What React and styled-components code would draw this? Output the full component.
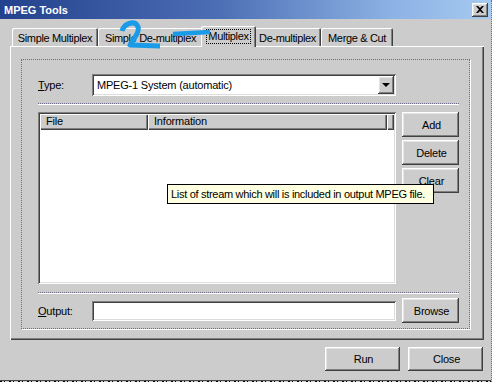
import React from 'react';
import styled, { createGlobalStyle, css } from 'styled-components';

const GlobalStyle = createGlobalStyle`
  html, body {
    margin: 0;
    padding: 0;
    background: #cccccc;
  }
  * {
    box-sizing: border-box;
  }
`;

const raised = css`
  box-shadow: inset -1px -1px #404040, inset 1px 1px #ffffff,
    inset -2px -2px #808080, inset 2px 2px #e4e4e4;
`;

const sunken = css`
  box-shadow: inset 1px 1px #808080, inset -1px -1px #ffffff,
    inset 2px 2px #404040, inset -2px -2px #dcdcdc;
`;

const Window = styled.div`
  position: relative;
  width: 492px;
  height: 382px;
  background: #cccccc;
  font-family: 'Liberation Sans', Arial, sans-serif;
  font-size: 11px;
  letter-spacing: -0.2px;
  color: #000;
  border-right: 1px dotted #6a6a88;
  display: flex;
  flex-direction: column;
  overflow: hidden;
`;

const TitleBar = styled.div`
  height: 19px;
  display: flex;
  align-items: center;
  justify-content: space-between;
  padding: 0 3px 0 4px;
  background: linear-gradient(90deg, #23418c 0%, #4d6fb6 45%, #8db2e4 80%, #a6caf0 100%);
`;

const Title = styled.span`
  color: #ffffff;
  font-weight: bold;
  font-size: 11px;
  letter-spacing: 0;
`;

const CaptionButton = styled.div`
  width: 16px;
  height: 14px;
  background: #cccccc;
  ${raised};
  display: flex;
  align-items: center;
  justify-content: center;
`;

const Body = styled.div`
  flex: 1;
  padding: 7px 7px 0 10px;
  display: flex;
  flex-direction: column;
`;

const TabStrip = styled.div`
  height: 20px;
  display: flex;
  align-items: flex-end;
  padding-left: 2px;
`;

const Tab = styled.div`
  width: ${p => p.$w}px;
  height: ${p => (p.$active ? 21 : 18)}px;
  margin: ${p => (p.$active ? '0 -2px -1px -2px' : '0')};
  position: relative;
  z-index: ${p => (p.$active ? 2 : 1)};
  background: #cccccc;
  border-radius: 2px 2px 0 0;
  box-shadow: inset 1px 1px #ffffff, inset -1px 0 #404040, inset -2px 0 #808080;
  display: flex;
  align-items: center;
  justify-content: center;
  padding-top: ${p => (p.$active ? 0 : 2)}px;
  white-space: nowrap;
  letter-spacing: -0.35px;
`;

const FocusText = styled.span`
  outline: 1px dotted #000;
  outline-offset: 0;
  padding: 0 1px;
  line-height: 13px;
`;

const Panel = styled.div`
  width: 474px;
  height: 294px;
  padding: 13px 0 0 11px;
  background: #cccccc;
  box-shadow: inset 1px 1px #ffffff, inset -1px -1px #404040, inset -2px -2px #808080;
`;

const Group = styled.div`
  width: 449px;
  height: 270px;
  border: 1px dotted #6a6a88;
  box-shadow: 1px 1px 0 #ffffff;
  padding: 14px 10px 0 16px;
  display: flex;
  flex-direction: column;
`;

const FieldRow = styled.div`
  height: ${p => p.$h}px;
  display: flex;
  align-items: center;
`;

const Label = styled.span`
  width: 54px;
  flex-shrink: 0;
`;

const U = styled.span`
  text-decoration: underline;
`;

const Combo = styled.div`
  width: 304px;
  height: 22px;
  background: #ffffff;
  ${sunken};
  display: flex;
  align-items: center;
  justify-content: space-between;
  padding: 0 2px 0 5px;
`;

const DropButton = styled.div`
  width: 16px;
  height: 18px;
  background: #cccccc;
  ${raised};
  display: flex;
  align-items: center;
  justify-content: center;
`;

const Arrow = styled.div`
  width: 0;
  height: 0;
  border-left: 4px solid transparent;
  border-right: 4px solid transparent;
  border-top: 4px solid #000;
`;

const Separator = styled.div`
  height: 2px;
  margin-top: ${p => p.$top}px;
  border-top: 1px dotted #6a6a88;
  border-bottom: 1px solid #ffffff;
`;

const ListRow = styled.div`
  margin-top: 7px;
  height: 172px;
  display: flex;
  gap: 6px;
`;

const ListView = styled.div`
  width: 358px;
  height: 172px;
  background: #ffffff;
  ${sunken};
  padding: 2px;
`;

const HeaderRow = styled.div`
  display: flex;
  height: 16px;
`;

const HeaderCell = styled.div`
  width: ${p => p.$w}px;
  flex: ${p => (p.$fill ? 1 : 'none')};
  height: 16px;
  background: #cccccc;
  box-shadow: inset 1px 1px #ffffff, inset -1px -1px #404040, inset -2px -2px #808080;
  padding: 1px 0 0 6px;
  line-height: 13px;
`;

const ButtonColumn = styled.div`
  display: flex;
  flex-direction: column;
  gap: 3px;
`;

const Button = styled.div`
  width: ${p => p.$w || 57}px;
  height: ${p => p.$h || 25}px;
  background: #cccccc;
  ${raised};
  display: flex;
  align-items: center;
  justify-content: center;
  padding-left: 2px;
`;

const TextInput = styled.div`
  width: 304px;
  height: 20px;
  background: #ffffff;
  ${sunken};
`;

const OutputRow = styled.div`
  margin-top: 4px;
  height: 25px;
  display: flex;
  align-items: center;
  gap: 6px;
`;

const OutputField = styled.div`
  display: flex;
  align-items: center;
`;

const Footer = styled.div`
  margin-top: 7px;
  display: flex;
  justify-content: flex-end;
  gap: 8px;
  padding-right: 1px;
`;

const BottomEdge = styled.div`
  height: 2px;
  border-top: 1px solid #4a4a4a;
  background: repeating-linear-gradient(90deg, #000 0 2px, #cccccc 2px 4px, #000 4px 5px, #cccccc 5px 9px);
`;

const Tooltip = styled.div`
  position: absolute;
  z-index: 10;
  left: 167px;
  top: 184px;
  width: 267px;
  height: 20px;
  background: #ffffe1;
  border: 1px solid #000;
  padding: 0 0 0 3px;
  line-height: 18px;
  white-space: nowrap;
  letter-spacing: -0.3px;
`;

const Scribble = styled.svg`
  position: absolute;
  z-index: 11;
  left: 0;
  top: 0;
  pointer-events: none;
`;

const tabs = [
  { label: 'Simple Multiplex', w: 86 },
  { label: 'Simple De-multiplex', w: 105 },
  { label: 'Multiplex', w: 55, active: true },
  { label: 'De-multiplex', w: 67 },
  { label: 'Merge & Cut', w: 72 },
];

export default function App() {
  return (
    <>
      <GlobalStyle />
      <Window>
        <TitleBar>
          <Title>MPEG Tools</Title>
          <CaptionButton>
            <svg width="8" height="7" viewBox="0 0 8 7">
              <path d="M0 0 L2 0 L4 2 L6 0 L8 0 L5 3.5 L8 7 L6 7 L4 5 L2 7 L0 7 L3 3.5 Z" fill="#000" />
            </svg>
          </CaptionButton>
        </TitleBar>

        <Body>
          <TabStrip>
            {tabs.map(t => (
              <Tab key={t.label} $w={t.w} $active={t.active}>
                {t.active ? <FocusText>{t.label}</FocusText> : t.label}
              </Tab>
            ))}
          </TabStrip>

          <Panel>
            <Group>
              <FieldRow $h={22}>
                <Label><U>T</U>ype:</Label>
                <Combo>
                  <span>MPEG-1 System (automatic)</span>
                  <DropButton><Arrow /></DropButton>
                </Combo>
              </FieldRow>

              <Separator $top={7} />

              <ListRow>
                <ListView>
                  <HeaderRow>
                    <HeaderCell $w={108}>File</HeaderCell>
                    <HeaderCell $w={239}>Information</HeaderCell>
                    <HeaderCell $fill />
                  </HeaderRow>
                </ListView>
                <ButtonColumn>
                  <Button>Add</Button>
                  <Button>Delete</Button>
                  <Button>Clear</Button>
                </ButtonColumn>
              </ListRow>

              <Separator $top={8} />

              <OutputRow>
                <OutputField>
                  <Label><U>O</U>utput:</Label>
                  <TextInput />
                </OutputField>
                <Button>Browse</Button>
              </OutputRow>
            </Group>
          </Panel>

          <Footer>
            <Button $w={75} $h={24}>Run</Button>
            <Button $w={75} $h={24}>Close</Button>
          </Footer>
        </Body>

        <BottomEdge />

        <Tooltip>List of stream which will is included in output MPEG file.</Tooltip>

        <Scribble width="492" height="382" viewBox="0 0 492 382">
          <path
            d="M122 31 C124 23 134 21 137 25 C141 30 135 37 130 45 L160 46"
            fill="none"
            stroke="#1a9be8"
            strokeWidth="5"
            strokeLinecap="butt"
            strokeLinejoin="round"
          />
          <path d="M173 34 L210 32" stroke="#1a9be8" strokeWidth="4.5" strokeLinecap="butt" />
        </Scribble>
      </Window>
    </>
  );
}
